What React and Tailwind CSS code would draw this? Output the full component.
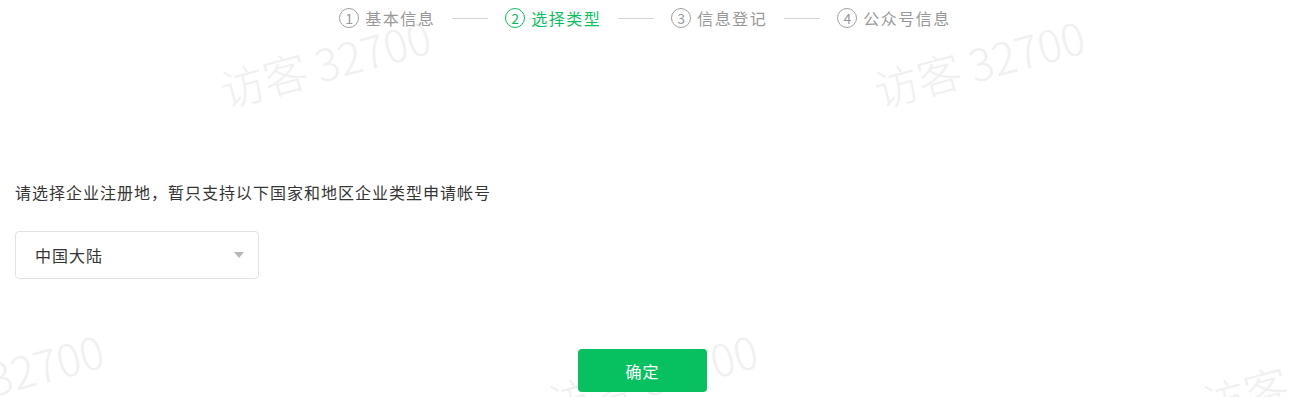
import { useState } from 'react';

const steps = [
  { no: 1, label: '基本信息' },
  { no: 2, label: '选择类型' },
  { no: 3, label: '信息登记' },
  { no: 4, label: '公众号信息' },
];

// watermark centres, one row repeats every 654px, next row shifted by half
const marks = [
  [325, 62],
  [979, 62],
  [-2, 376],
  [652, 376],
  [1306, 376],
];

function Watermarks() {
  return (
    <div className="pointer-events-none absolute inset-0 overflow-hidden">
      {marks.map(([x, y], i) => (
        <div
          key={i}
          className="absolute -translate-x-1/2 -translate-y-1/2 -rotate-[15deg] whitespace-nowrap text-[44px] font-light leading-none text-[#f0f0f0]"
          style={{ left: x, top: y }}
        >
          访客 32700
        </div>
      ))}
    </div>
  );
}

function Stepper({ current }) {
  return (
    <div className="flex h-[36px] items-center justify-center">
      {steps.map((s, i) => {
        const active = s.no === current;
        return (
          <div key={s.no} className="flex items-center">
            {i > 0 && <div className="mx-[17px] h-px w-[36px] bg-[#d5d5d5]" />}
            <div className={`flex items-center ${active ? 'text-[#07c160]' : 'text-[#999999]'}`}>
              <span
                className={`flex h-[20px] w-[20px] shrink-0 items-center justify-center rounded-full border text-[14px] leading-none ${
                  active ? 'border-[#07c160]' : 'border-[#a0a0a0]'
                }`}
              >
                {s.no}
              </span>
              <span className="ml-[6px] tracking-[1.5px]">{s.label}</span>
            </div>
          </div>
        );
      })}
    </div>
  );
}

export default function App() {
  const [region] = useState('中国大陆');

  return (
    <div
      className="relative h-[397px] w-full overflow-hidden bg-white text-[16px] leading-[24px] text-[#353535]"
      style={{ fontFamily: '"Noto Sans CJK SC", "Noto Sans", sans-serif' }}
    >
      <Watermarks />
      <div className="relative">
        <Stepper current={2} />

        <div className="px-[15px]">
          <p className="mt-[144px] tracking-[1px]">请选择企业注册地，暂只支持以下国家和地区企业类型申请帐号</p>

          <div className="mt-[27px] flex h-[48px] w-[244px] items-center justify-between rounded-[4px] border border-[#e2e2e2] bg-white pl-[19px] pr-[14px]">
            <span className="tracking-[1px]">{region}</span>
            <svg width="10" height="6" viewBox="0 0 10 6" className="fill-[#b8b8b8]">
              <path d="M0 0h10L5 6z" />
            </svg>
          </div>
        </div>

        <div className="mt-[70px] flex justify-center pr-[5px]">
          <button className="h-[43px] w-[129px] rounded-[4px] bg-[#07c160] text-[16px] tracking-[1px] text-white">
            确定
          </button>
        </div>
      </div>
    </div>
  );
}
